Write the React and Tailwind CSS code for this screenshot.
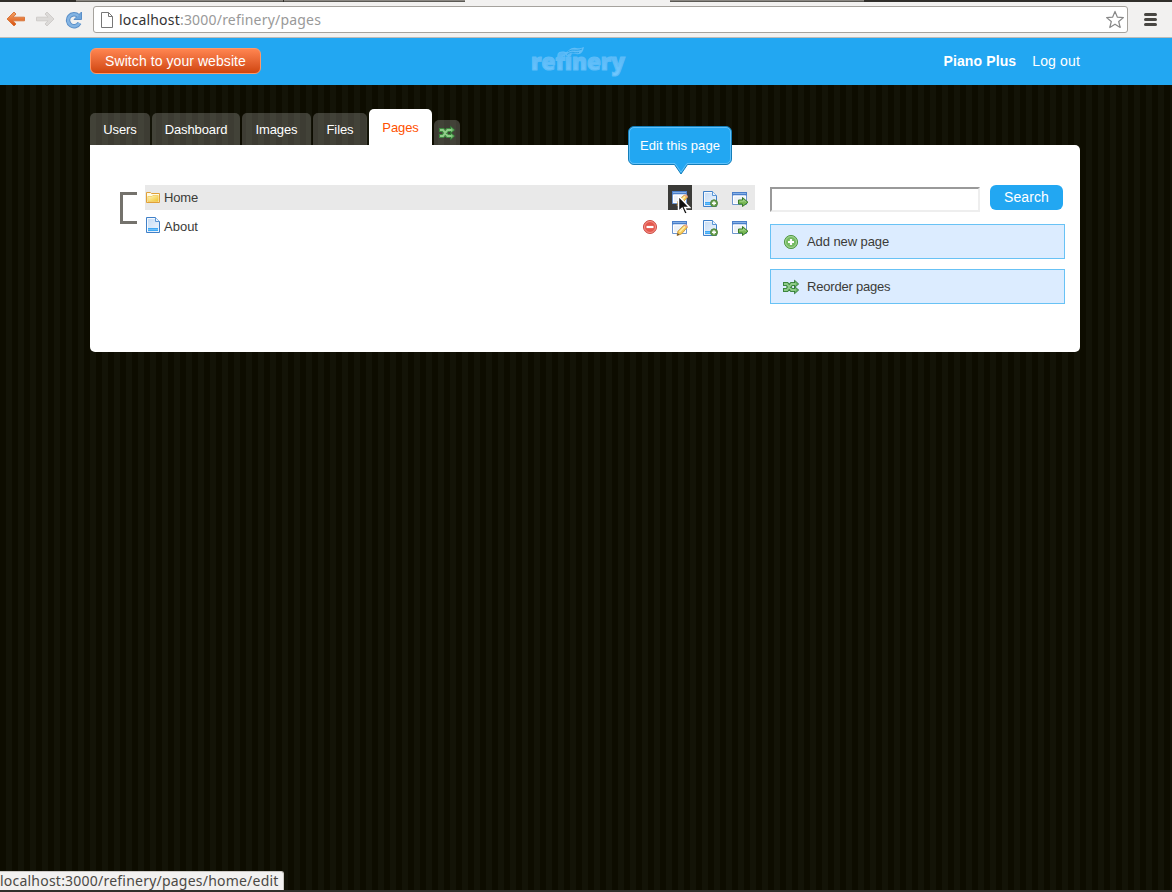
import React from 'react';

function BackIcon() {
  return (
    <svg width="20" height="18" viewBox="0 0 20 18">
      <defs><linearGradient id="back" x1="0" y1="0" x2="0" y2="1"><stop offset="0" stopColor="#f5a366" /><stop offset="1" stopColor="#d8500f" /></linearGradient></defs>
      <path d="M8 2 1 9l7 7 2-2-3-3.200H18.500V7.200H7L10 4z" fill="url(#back)" stroke="#d9783d" strokeLinejoin="round" />
    </svg>
  );
}

function ForwardIcon() {
  return (
    <svg width="20" height="18" viewBox="0 0 20 18">
      <path d="M12 2 19 9l-7 7-2-2 3-3.200H1.500V7.200H13L10 4z" fill="#dcdad8" stroke="#cfccca" strokeLinejoin="round" />
    </svg>
  );
}

function ReloadIcon() {
  return (
    <svg width="18" height="18" viewBox="0 0 18 18">
      <path d="M13.300 5A6 6 0 1 0 14.400 12" fill="none" stroke="#5a8fc8" strokeWidth="4.400" />
      <path d="M16.500 1v7.500H9z" fill="#6fa5da" stroke="#5a8fc8" strokeLinejoin="round" />
      <path d="M13.300 5A6 6 0 1 0 14.400 12" fill="none" stroke="#83b4e3" strokeWidth="2.600" />
    </svg>
  );
}

function FileIcon() {
  return (
    <svg width="12" height="16" viewBox="0 0 12 16">
      <path d="M.5.5h7l4 4v11H.5z" fill="#fff" stroke="#777" />
      <path d="M7.500.5v4h4" fill="none" stroke="#777" />
    </svg>
  );
}

function StarIcon() {
  return (
    <svg width="20" height="19" viewBox="0 0 20 19">
      <path d="m10 1.400 2.400 5.800 6 .4-4.700 3.900 1.500 6L10 14.200l-5.200 3.300 1.500-6-4.700-3.900 6-.4z" fill="#fff" stroke="#888" strokeWidth="1.200" strokeLinejoin="round" />
    </svg>
  );
}

function FolderIcon() {
  return (
    <svg width="16" height="16" viewBox="0 0 16 16">
      <defs><linearGradient id="folder" x1="0" y1="0" x2="1" y2="1"><stop offset="0" stopColor="#fff6c8" /><stop offset="1" stopColor="#f0c52c" /></linearGradient></defs>
      <path d="M1.500 12.500v-10h4l1 1h8v9z" fill="#fffbe6" stroke="#e0a039" />
      <path d="M2.800 11.500v-5h4l1-1h5.400v6z" fill="url(#folder)" stroke="#f0c650" strokeWidth=".7" />
    </svg>
  );
}

function PageIcon({ add }) {
  return (
    <svg width="16" height="16" viewBox="0 0 16 16">
      <defs><linearGradient id="sheet" x1="0" y1="0" x2="1" y2="1"><stop offset="0" stopColor="#c3daf4" /><stop offset="1" stopColor="#f2f8fe" /></linearGradient></defs>
      <path d="M1.500.5h9l4 4v11h-13z" fill="url(#sheet)" stroke="#4080c8" />
      <path d="M2.500 14.500v-13h7.500" fill="none" stroke="#fff" opacity=".8" />
      <path d="M10.500.5v4h4" fill="#eaf4ff" stroke="#5a96d6" />
      <path d="M3 11h10v3H3z" fill="#3fa8f4" />
      <path d="M3 12.500h10" stroke="#6cc0fc" />
      {add && <g><circle cx="12" cy="12.300" r="3.500" fill="#6a9e4e" stroke="#4d853b" /><path d="M12 10.300v4M10 12.300h4" stroke="#fff" strokeWidth="1.400" /></g>}
    </svg>
  );
}

function WindowBase() {
  return (
    <g>
      <path d="M.5 1.500h14v12H.5z" fill="#f3f7fb" stroke="#6e96ce" />
      <path d="M0 1h15v3.500H0z" fill="#4a7fca" />
      <path d="M1 2.500h13" stroke="#86b0e6" />
      <path d="M1.500 5h12v7.500h-12z" fill="#eef2f8" stroke="#fff" />
    </g>
  );
}

function EditIcon() {
  return (
    <svg width="16" height="16" viewBox="0 0 16 16">
      <WindowBase />
      <path d="m5 15.500 1-4.300L12 5.200q2.400-.4 3.400 2L9.500 14z" fill="#f7ca58" stroke="#c08c34" strokeWidth=".8" />
      <path d="m7.500 12 5.500-5.500" stroke="#fff0a8" strokeWidth="1.400" />
      <path d="m12 5.200 3.400 2.500.5-1.800-1.900-1.600z" fill="#eba78c" />
      <path d="m5 15.500.7-2.500 1.900 1.800z" fill="#63513d" />
    </svg>
  );
}

function GoIcon() {
  return (
    <svg width="17" height="16" viewBox="0 0 17 16">
      <WindowBase />
      <path d="M6.500 9h4V6.500l5.500 4.800-5.500 4.200V13h-4z" fill="#79b957" stroke="#397b27" />
      <path d="M7.500 10.200h4V9l2.400 2" fill="none" stroke="#a7d690" strokeWidth=".9" />
    </svg>
  );
}

function DeleteIcon() {
  return (
    <svg width="16" height="16" viewBox="0 0 16 16">
      <circle cx="8" cy="8" r="6.500" fill="#e4574d" stroke="#cd4d46" />
      <circle cx="8" cy="8" r="5.500" fill="none" stroke="#f6a49a" strokeWidth=".8" />
      <path d="M4.500 8h7" stroke="#fff" strokeWidth="2.200" />
    </svg>
  );
}

function AddIcon() {
  return (
    <svg width="16" height="16" viewBox="0 0 16 16">
      <circle cx="8" cy="8" r="6.600" fill="#74ba62" stroke="#549a49" />
      <circle cx="8" cy="8" r="5.500" fill="none" stroke="#b4dda6" strokeWidth=".8" />
      <path d="M8 5v6M5 8h6" stroke="#fff" strokeWidth="2.200" />
    </svg>
  );
}

function ShuffleIcon() {
  return (
    <svg width="16" height="16" viewBox="0 0 16 16">
      <path d="M0 5h4l4.500 6H12M0 11h4l4.500-6H12" fill="none" stroke="#3d873f" strokeWidth="4" />
      <path d="M11.500 1.200 15.700 5l-4.200 3.500zM11.500 7.500l4.200 3.500-4.200 3.800z" fill="#69b764" stroke="#2c7132" strokeWidth=".8" />
      <path d="M1 5h3l4.500 6h4.300M1 11h3l4.500-6h4.300" fill="none" stroke="#8fcb88" strokeWidth="2" />
    </svg>
  );
}

function Cursor() {
  return (
    <svg className="absolute left-[9px] top-[10px] z-10" width="14" height="21" viewBox="0 0 14 21">
      <path d="M1.500 1v15.500l3.600-3.300 2.700 6.100 2.600-1.200-2.700-5.700h4.900z" fill="#111" stroke="#fff" strokeWidth="1.500" />
    </svg>
  );
}

function Toolbar() {
  return (
    <div className="h-[38px] bg-[#f2f1f0] border-b border-[#bdbbb8] flex flex-col font-['Noto_Sans',sans-serif]">
      <div className="h-0.5 shrink-0 flex bg-[#302e2a]">
        <div className="w-[76px]" />
        <div className="w-[207px] bg-[#8b8883] border-b border-[#5b5954]" />
        <div className="w-[181px] ml-px bg-[#8b8883] border-b border-[#5b5954]" />
        <div className="w-[205px] bg-[#f2f1f0]" />
        <div className="w-[194px] bg-[#8b8883] border-b border-[#5b5954]" />
      </div>
      <div className="flex pt-1 items-start">
        <div className="ml-1.5 mt-1 w-[29px]"><BackIcon /></div>
        <div className="mt-1 w-[30px]"><ForwardIcon /></div>
        <div className="mt-[5px] w-7"><ReloadIcon /></div>
        <div className="w-[1035px] h-[27px] rounded-[3px] border border-[#a5a29d] bg-white flex items-center pl-[7px] pr-0.5">
          <FileIcon />
          <span className="ml-1.5 text-[14px] leading-5 tracking-[0.2px] text-[#999] whitespace-pre"><span className="text-[#333]">localhost</span>:3000/refinery/pages</span>
          <div className="ml-auto"><StarIcon /></div>
        </div>
        <div className="ml-4 mt-[7px] flex flex-col gap-0.5">
          <div className="w-[13px] h-[3px] rounded-full bg-[#484642]" />
          <div className="w-[13px] h-[3px] rounded-full bg-[#484642]" />
          <div className="w-[13px] h-[3px] rounded-full bg-[#484642]" />
        </div>
      </div>
    </div>
  );
}

function Logo() {
  return (
    <svg width="100" height="36" viewBox="0 0 100 36" className="ml-[269px] overflow-visible">
      <defs><linearGradient id="logo" x1="0" y1="0" x2="0" y2="1"><stop offset="0" stopColor="#48b0f3" /><stop offset="1" stopColor="#74c9ff" /></linearGradient></defs>
      <text x="1" y="26" fontFamily="Open Sans, sans-serif" fontWeight="800" fontSize="23" textLength="94" lengthAdjust="spacingAndGlyphs" fill="url(#logo)" stroke="#5dbcf8" strokeWidth="1.200">refinery</text>
      <path d="M36 11c2-5 5-8 10-7 3 .6 5 0 8-1-1 5-3 8-8 7-4-.8-6-.6-10 1z" fill="#60bdf7" />
      <path d="M38 8c4-4 8 0 14-3M37 10.500c5-4 7-1 12-2" fill="none" stroke="#239fe8" strokeWidth=".9" />
    </svg>
  );
}

function Header() {
  return (
    <header className="h-[47px] bg-[#22a7f2]">
      <div className="w-[990px] ml-[90px] flex items-center h-full text-[14px] text-white">
        <a className="w-[171px] h-[26px] -mt-px rounded-[6px] border border-[#ff9868] bg-linear-to-b from-[#ff8550] to-[#d0450a] flex items-center justify-center leading-4 tracking-[0.07px]">Switch to your website</a>
        <Logo />
        <strong className="ml-auto tracking-[0.12px]">Piano Plus</strong>
        <a className="ml-4 tracking-[0.15px]">Log out</a>
      </div>
    </header>
  );
}

const tabs = [
  { name: 'Users', size: 'w-[60px]' },
  { name: 'Dashboard', size: 'w-[88px]' },
  { name: 'Images', size: 'w-[69px]' },
  { name: 'Files', size: 'w-[54px]' },
];

function Tabs() {
  return (
    <nav className="h-[60px] flex items-end gap-0.5 text-[13px] text-white">
      {tabs.map(t => <a key={t.name} className={`${t.size} h-8 pt-0.5 rounded-t-[5px] bg-white/20 flex items-center justify-center tracking-[-0.1px]`}>{t.name}</a>)}
      <a className="w-[63px] h-9 pt-0.5 rounded-t-[5px] bg-white text-[#ff5100] flex items-center justify-center tracking-[-0.1px]">Pages</a>
      <a className="w-[26px] h-[25px] rounded-t-[5px] bg-white/20 pt-[5px] pl-[5px]"><ShuffleIcon /></a>
    </nav>
  );
}

function Tooltip() {
  return (
    <div className="absolute -left-10 -top-[59px] w-[104px] h-[49px]">
      <svg className="absolute inset-0" width="104" height="49" viewBox="0 0 104 49">
        <path d="M6 .5h92a5.500 5.500 0 0 1 5.500 5.500v27a5.500 5.500 0 0 1-5.500 5.500H59.500L53 48l-6.500-9.500H6A5.500 5.500 0 0 1 .5 33V6A5.500 5.500 0 0 1 6 .5z" fill="#22a7f2" stroke="#147eb9" />
        <path d="M6 1.500h92a4.500 4.500 0 0 1 4.500 4.500v27a4.500 4.500 0 0 1-4.500 4.500H59L53 46.200 47 37.500H6A4.500 4.500 0 0 1 1.500 33V6A4.500 4.500 0 0 1 6 1.500z" fill="none" stroke="#60c1fb" />
      </svg>
      <span className="relative block text-center text-[13px] leading-[39px] tracking-[0.1px] text-white">Edit this page</span>
    </div>
  );
}

function Tree() {
  return (
    <div className="flex w-[635px]">
      <div className="w-[17px] h-8 mt-[7px] mr-2 border-3 border-r-0 border-[#74726c]" />
      <div className="w-[610px]">
        <div className="h-[25px] bg-[#e9e9e9] flex items-center">
          <FolderIcon /><span className="ml-[3px] tracking-[-0.15px]">Home</span>
          <div className="ml-auto relative w-6 h-[25px] bg-[#3b3b38] pl-1 pt-[5px]"><EditIcon /><Cursor /><Tooltip /></div>
          <div className="w-[30px] pl-2.5 pt-0.5"><PageIcon add /></div>
          <div className="w-[33px] pl-2.5 pt-0.5"><GoIcon /></div>
        </div>
        <div className="mt-1 h-[25px] flex items-center">
          <div className="pb-[3px]"><PageIcon /></div><span className="ml-[3px]">About</span>
          <div className="ml-auto w-[30px]"><DeleteIcon /></div>
          <div className="w-[30px] pt-0.5"><EditIcon /></div>
          <div className="w-[30px] pt-0.5"><PageIcon add /></div>
          <div className="w-[23px] pt-0.5"><GoIcon /></div>
        </div>
      </div>
    </div>
  );
}

function Actions() {
  return (
    <aside className="ml-[15px] w-[295px]">
      <div className="flex">
        <input aria-label="Search pages" className="mt-0.5 w-[210px] h-[25px] border-2 border-t-[#999] border-l-[#999] border-r-[#eee] border-b-[#eee]" />
        <button className="ml-2.5 w-[73px] h-[25px] rounded-[6px] bg-[#22a7f2] text-white text-[14px] leading-[25px] tracking-[0.1px]">Search</button>
      </div>
      <a className="mt-3 h-[35px] bg-[#dcecff] border border-[#68c2f5] flex items-center pl-3 gap-2 tracking-[-0.08px]"><AddIcon />Add new page</a>
      <a className="mt-2.5 h-[35px] bg-[#dcecff] border border-[#68c2f5] flex items-center pl-3 gap-2 tracking-[-0.2px]"><ShuffleIcon />Reorder pages</a>
    </aside>
  );
}

export default function App() {
  return (
    <div className="h-[892px] flex flex-col overflow-hidden font-['Liberation_Sans',sans-serif] text-[13px] text-[#3b3b38] bg-[repeating-linear-gradient(90deg,#0d0c00_0px,#0d0c00_6px,#131307_6px,#131307_12px)]">
      <Toolbar />
      <Header />
      <div className="w-[990px] ml-[90px]">
        <Tabs />
        <main className="h-[207px] rounded-b-[5px] rounded-tr-[5px] bg-white pl-[30px] pt-10 flex items-start">
          <Tree />
          <Actions />
        </main>
      </div>
      <footer className="mt-auto border-b-2 border-[#302e2a]">
        <div className="w-[284px] h-[19px] rounded-tr-[3px] bg-[#f2f1f0] border-r border-t border-[#cbc8c4] font-['Noto_Sans',sans-serif] text-[14px] leading-[18px] tracking-[0.22px] text-[#4b4945] whitespace-nowrap">localhost:3000/refinery/pages/home/edit</div>
      </footer>
    </div>
  );
}
